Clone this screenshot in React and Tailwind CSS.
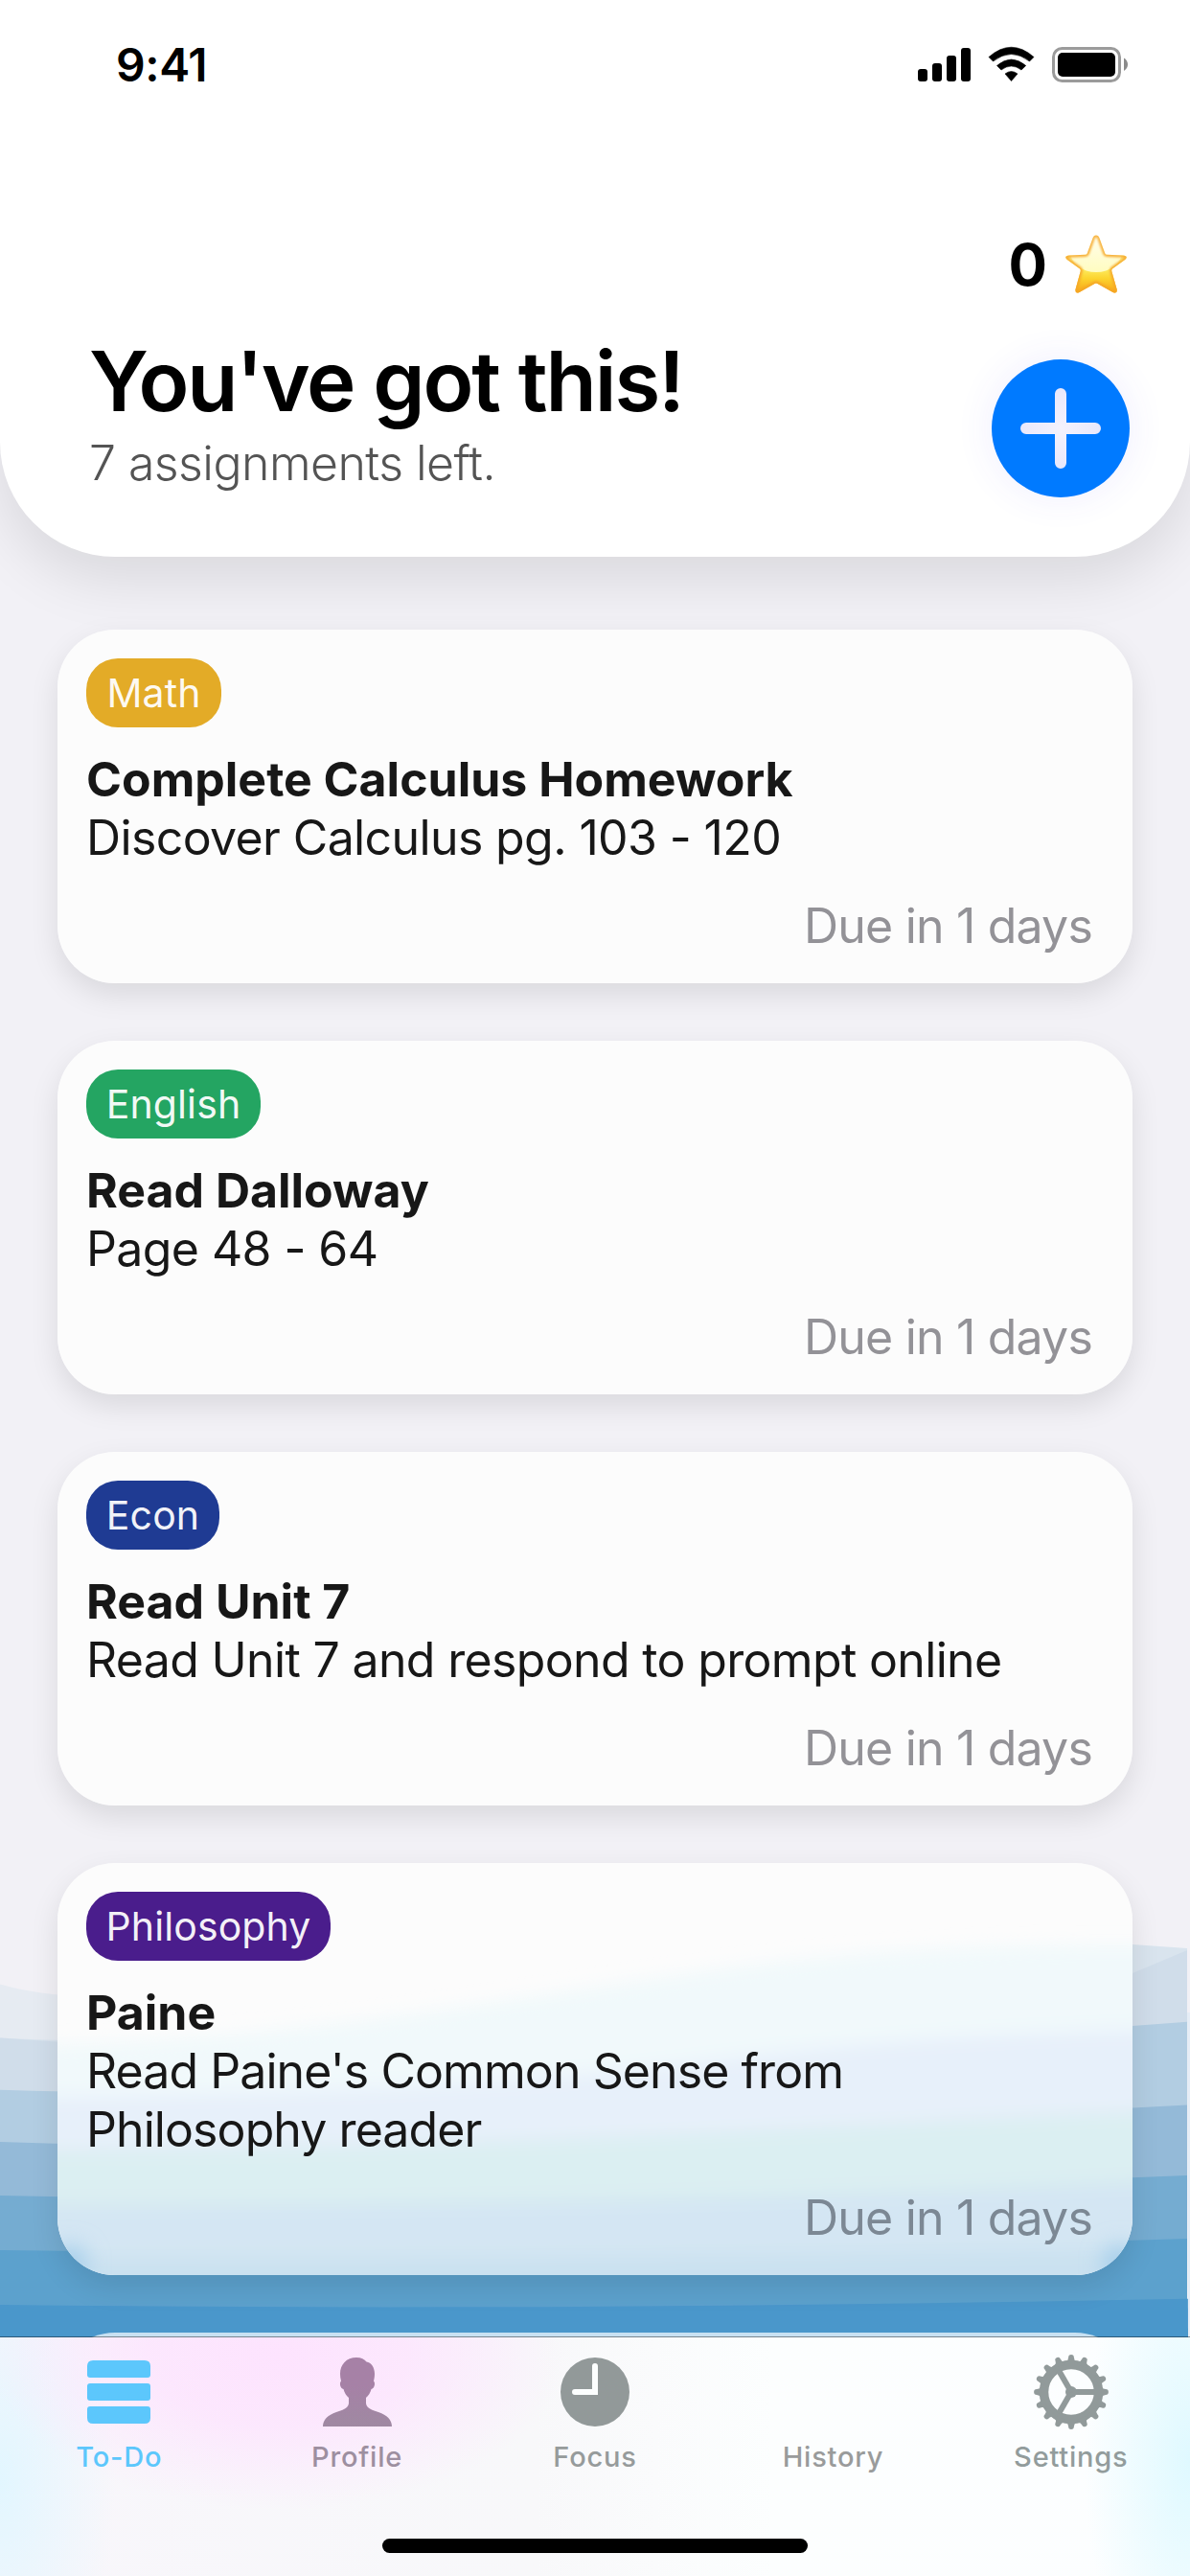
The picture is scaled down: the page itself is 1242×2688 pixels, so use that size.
const FONT = 'font-["Inter","Liberation_Sans",sans-serif]';

const assignments = [
  { subject: "Math", pill: "w-[141px] bg-[#e3ab27]", title: "Complete Calculus Homework", detail: "Discover Calculus pg. 103 - 120", track: "tracking-[-0.62px]" },
  { subject: "English", pill: "w-[182px] bg-[#24a562]", title: "Read Dalloway", detail: "Page 48 - 64", track: "tracking-[-0.6px]" },
  { subject: "Econ", pill: "w-[139px] bg-[#1f3b93]", title: "Read Unit 7", detail: "Read Unit 7 and respond to prompt online", track: "tracking-[-0.66px]" },
  { subject: "Philosophy", pill: "w-[255px] bg-[#4a1d8c]", title: "Paine", detail: "Read Paine's Common Sense from Philosophy reader", track: "tracking-[-0.92px]", tall: true },
];

function StatusIcons() {
  return (
    <svg className="block h-[40px] w-[222px]" viewBox="957 48 222 40">
      <rect x="958" y="72" width="10" height="13" rx="3" />
      <rect x="973" y="66" width="10" height="19" rx="3" />
      <rect x="988" y="58" width="10" height="27" rx="3" />
      <rect x="1003" y="50" width="10" height="35" rx="3" />
      <path d="M1032 59.5Q1055.500 39 1079 59.500L1074.500 64Q1055.500 49 1036.500 64Z" strokeLinejoin="round" stroke="#000" strokeWidth="0.600" />
      <path d="M1040.500 68.500Q1055.500 55.500 1070.700 68.500L1066 73Q1055.500 65 1045 73Z" strokeLinejoin="round" stroke="#000" strokeWidth="0.600" />
      <path d="M1049 77Q1055.500 72 1062 77L1055.500 84.500Z" strokeLinejoin="round" stroke="#000" strokeWidth="0.600" />
      <rect x="1099.500" y="50.500" width="69" height="34" rx="9" fill="none" stroke="#9b9b9b" strokeWidth="3" />
      <rect x="1104" y="55" width="60" height="25" rx="5" />
      <path d="M1173 60.500Q1177 63 1177 67.300Q1177 71.500 1173 74Z" fill="#8b8b8b" />
    </svg>
  );
}

function Star() {
  const d = "M33 1.500Q35.500 1.500 36.500 4.500L42.300 20.500Q42.800 21.700 44.300 21.700L61 22.500Q67 23.300 63.500 26.700L50 36.500Q49 37.500 49.300 39L54.700 58Q55.200 63 50.500 61L34.500 52Q33 51.200 31.500 52L15.500 61Q11 63 11.500 58L16.700 39Q17 37.500 16 36.500L2.500 26.700Q-1 23.300 5 22.500L21.700 21.700Q23.200 21.700 23.700 20.500L29.500 4.500Q30.500 1.500 33 1.500Z";
  return (
    <svg className="block h-[65px] w-[66px]" viewBox="0 0 66 65">
      <defs>
        <linearGradient id="starFill" x1="0" y1="0" x2="0" y2="1">
          <stop offset="0" stopColor="#fff3c4" />
          <stop offset="0.55" stopColor="#fdf06a" />
          <stop offset="0.75" stopColor="#fcd42e" />
          <stop offset="1" stopColor="#f7a31a" />
        </linearGradient>
        <linearGradient id="starEdge" x1="0" y1="0" x2="0" y2="1">
          <stop offset="0" stopColor="#f8b648" />
          <stop offset="1" stopColor="#f5a623" />
        </linearGradient>
        <linearGradient id="starGloss" x1="0" y1="0" x2="0" y2="1">
          <stop offset="0" stopColor="#fffdf0" />
          <stop offset="1" stopColor="#fffcc0" />
        </linearGradient>
        <clipPath id="starClip"><path d={d} /></clipPath>
        <filter id="soft"><feGaussianBlur stdDeviation="1.2" /></filter>
      </defs>
      <path d={d} fill="url(#starFill)" />
      <g clipPath="url(#starClip)">
        <ellipse cx="33" cy="19" rx="27" ry="21" fill="url(#starGloss)" />
        <path d={d} fill="none" stroke="url(#starEdge)" strokeWidth="4.500" filter="url(#soft)" />
      </g>
    </svg>
  );
}

function Waves() {
  return (
    <svg className="absolute top-[1980px] left-0 h-[460px] w-[1242px]" viewBox="0 1980 1242 460">
      <path d="M0 2070.500C50 2085 110 2087 180 2074C360 2034 480 1985 620 1962C760 1990 980 2130 1182 2059L1239 2035V2440H0Z" fill="#e6ebf2" />
      <path d="M0 2126.600C380 2150 700 1994 1182 2029L1239 2033V2440H0Z" fill="#d9e4ee" />
      <path d="M0 2126.600L62 2130.800C500 2150 850 2200 1182 2059L1239 2035V2440H0Z" fill="#d0ddea" />
      <path d="M0 2180.700C420 2196 780 2134 1182 2114L1239 2109.700V2440H0Z" fill="#b2cde2" />
      <path d="M0 2235C420 2249 800 2220 1239 2196.500V2440H0Z" fill="#94bad8" />
      <path d="M0 2290.900C420 2300 800 2288 1239 2270V2440H0Z" fill="#75acd1" />
      <path d="M0 2348C420 2353 800 2349 1239 2336V2440H0Z" fill="#5ca1cd" />
      <path d="M0 2405C420 2410 800 2407 1240 2398.700V2440H0Z" fill="#4a97cb" />
      <path d="M1239 2100H1242V2440H1240Z" fill="#e6edf6" />
    </svg>
  );
}

function CardTint() {
  return (
    <svg className="absolute inset-0 h-full w-full" viewBox="60 1944 1122 430" preserveAspectRatio="none">
      <defs>
        <filter id="tint" x="-10%" y="-10%" width="120%" height="120%"><feGaussianBlur stdDeviation="9" /></filter>
        <filter id="corner" x="-100%" y="-100%" width="300%" height="300%"><feGaussianBlur stdDeviation="12" /></filter>
      </defs>
      <g filter="url(#tint)">
        <path d="M0 2135C300 2130 500 2090 713 2060C850 2040 1000 2026 1242 2030V2440H0Z" fill="#f1f9fb" />
        <path d="M0 2188C400 2184 600 2170 792 2144C950 2126 1050 2122 1242 2116V2440H0Z" fill="#e7f0fa" />
        <path d="M0 2244C500 2242 800 2222 1242 2200V2440H0Z" fill="#dbeff2" />
        <path d="M0 2300C500 2302 850 2292 1242 2274V2440H0Z" fill="#d4e6f3" />
        <path d="M0 2356C500 2358 850 2354 1242 2346V2440H0Z" fill="#cae1f0" />
      </g>
      <circle cx="72" cy="2362" r="18" fill="#9fcbea" filter="url(#corner)" />
      <circle cx="1170" cy="2362" r="18" fill="#9fcbea" filter="url(#corner)" />
    </svg>
  );
}

function Card({ item }) {
  return (
    <article className={`relative overflow-hidden rounded-[60px] bg-[#fcfcfc] ${item.tall ? "h-[430px]" : "h-[369px]"}`}>
      {item.tall && <CardTint />}
      <div className="relative flex h-full flex-col px-[30px] pt-[30px]">
        <span className={`flex h-[72px] items-center justify-center rounded-[33px] text-[41px] leading-none tracking-[0.1px] text-white/95 ${item.pill}`}>
          {item.subject}
        </span>
        <h2 className="mt-[24px] text-[50px] leading-[61px] font-bold whitespace-nowrap text-[#171717]">{item.title}</h2>
        <p className={`max-w-[960px] text-[50px] leading-[61px] text-[#171717] ${item.track}`}>{item.detail}</p>
        <p className={`mt-auto mr-[12px] mb-[29px] text-right text-[50px] leading-[61px] tracking-[-0.8px] ${item.tall ? "text-[#7c8894]" : "text-[#939297]"}`}>Due in 1 days</p>
      </div>
    </article>
  );
}

function TodoIcon() {
  return (
    <svg className="h-[78px] w-[78px]" viewBox="0 0 78 78" fill="#5cc7fc">
      <path d="M6 12Q6 6 12 6H66Q72 6 72 12V21Q72 24 69 24H9Q6 24 6 21Z" />
      <rect x="6" y="30" width="66" height="18" rx="3" />
      <path d="M6 57Q6 54 9 54H69Q72 54 72 57V66Q72 72 66 72H12Q6 72 6 66Z" />
    </svg>
  );
}

function ProfileIcon() {
  return (
    <svg className="h-[78px] w-[78px]" viewBox="-3 -3 78 78">
      <defs>
        <linearGradient id="person" x1="0" y1="0" x2="0" y2="1">
          <stop offset="0.4" stopColor="#a681a6" />
          <stop offset="1" stopColor="#9f89a2" />
        </linearGradient>
      </defs>
      <path d="M35 0C40 0 43.500 1.800 45.500 4.500C50.500 5 54 10.500 54 17C54 20 53.500 22.500 53 24.500C55 26.500 54 32.500 50.500 33C49.500 37 47.500 40 45 42V48C46 54 52 54.500 58 57C67 60 72 65 72 72H0C0 65 5 60 14 57C20 54.500 26 54 27 48V42C24.500 40 22.500 37 21.500 33C18 32.500 17 26.500 19 24.500C18.300 22 18 19.500 18 17C18 7.500 24.500 0 35 0Z" fill="url(#person)" />
    </svg>
  );
}

function FocusIcon() {
  return (
    <svg className="h-[78px] w-[78px]" viewBox="0 0 78 78">
      <circle cx="39" cy="39" r="36" fill="#929999" />
      <path d="M39 12V39H18" stroke="#fcfefe" strokeWidth="6" strokeLinecap="round" fill="none" />
    </svg>
  );
}

function SettingsIcon() {
  const teeth = Array.from({ length: 16 }, (_, i) => i * 22.5);
  return (
    <svg className="h-[78px] w-[78px]" viewBox="-39 -39 78 78" fill="#919a9a">
      <circle r="28.500" fill="none" stroke="#919a9a" strokeWidth="9.500" />
      {teeth.map((a) => (
        <path key={a} transform={`rotate(${a})`} d="M-5.500 -32Q-2.900 -33 -2.900 -36A2.900 2.900 0 0 1 2.900 -36Q2.900 -33 5.500 -32V-29H-5.500Z" />
      ))}
      <circle r="6" />
      {[0, 120, 240].map((a) => (
        <path key={a} transform={`rotate(${a})`} d="M0 -3H26V3H0Z" />
      ))}
    </svg>
  );
}

const tabs = [
  { label: "To-Do", icon: <TodoIcon />, color: "text-[#5cc7fc]" },
  { label: "Profile", icon: <ProfileIcon />, color: "text-[#9d8fa0]" },
  { label: "Focus", icon: <FocusIcon />, color: "text-[#969b9b]" },
  { label: "History", icon: null, color: "text-[#999b9b]" },
  { label: "Settings", icon: <SettingsIcon />, color: "text-[#929c9c]" },
];

export default function App() {
  return (
    <div className={`relative h-[2688px] w-[1242px] overflow-hidden bg-[#f2f1f6] text-black ${FONT}`}>
      <Waves />
      <header className="relative h-[581px] rounded-b-[120px] bg-white shadow-[0_24px_60px_rgba(0,0,0,0.1)]">
        <div className="flex items-start justify-between pt-[48px] pr-[63px] pl-[121px]">
          <span className="text-[48px] leading-[40px] font-semibold tracking-[-0.4px]">9:41</span>
          <StatusIcons />
        </div>
        <div className="mt-[154px] flex h-[68px] items-center justify-end gap-[19px] pr-[65px]">
          <span className="text-[60px] leading-[64px] font-bold tracking-[-1px]">0</span>
          <Star />
        </div>
        <div className="mt-[36px] flex items-start justify-between pr-[63px] pl-[92px]">
          <div className="pl-px">
            <h1 className="text-[87px] leading-[104px] font-semibold tracking-[-2.1px]">You've got this!</h1>
            <p className="mt-[3px] text-[50px] leading-[61px] font-light tracking-[-0.55px] text-[#545454]">7 assignments left.</p>
          </div>
          <button className="mt-[29px] flex size-[144px] items-center justify-center rounded-full bg-[#007aff] shadow-[0_0_40px_rgba(80,70,255,0.09)]" aria-label="Add assignment">
            <svg className="size-[84px]" viewBox="0 0 84 84">
              <defs>
                <radialGradient id="plus" gradientUnits="userSpaceOnUse" cx="42" cy="42" r="42">
                  <stop offset="0" stopColor="#f4f2fd" />
                  <stop offset="1" stopColor="#e9e8fb" />
                </radialGradient>
              </defs>
              <path d="M6 36H36V6A6 6 0 0 1 48 6V36H78A6 6 0 0 1 78 48H48V78A6 6 0 0 1 36 78V48H6A6 6 0 0 1 6 36Z" fill="url(#plus)" />
            </svg>
          </button>
        </div>
      </header>
      <main className="relative mt-[76px] flex flex-col gap-[60px] px-[60px]">
        {assignments.map((item) => (
          <div key={item.subject} className="rounded-[60px] shadow-[0_12px_30px_rgba(0,0,0,0.1)]">
            <Card item={item} />
          </div>
        ))}
        <div className="h-[369px] rounded-[60px] bg-[#c8e1f2]" />
      </main>
      <nav className="absolute inset-x-0 bottom-0 h-[250px] border-t border-[#00000066] bg-[radial-gradient(ellipse_300px_160px_at_290px_20px,#fde3fe_0%,#fde4fed0_45%,#fde4fe00_100%),radial-gradient(ellipse_120px_260px_at_0px_150px,#e2f6ff_0%,#e2f6ff00_100%),radial-gradient(ellipse_110px_260px_at_1242px_130px,#dff9ff_0%,#dff9ff00_100%),linear-gradient(90deg,#f8f6fb_0%,#f8f8fa_45%,#fcfefe_65%,#fcfeff_100%)] bg-clip-padding">
        <ul className="flex w-[1242px]">
          {tabs.map((t) => (
            <li key={t.label} className={`flex flex-1 flex-col items-center pt-[18px] ${t.color}`}>
              <span className="block h-[78px]">{t.icon}</span>
              <span className="mt-[11px] text-[29px] leading-[36px] font-medium tracking-[0.8px]">{t.label}</span>
            </li>
          ))}
        </ul>
        <div className="absolute bottom-[24px] left-[399px] h-[15px] w-[444px] rounded-full bg-black" />
      </nav>
    </div>
  );
}
